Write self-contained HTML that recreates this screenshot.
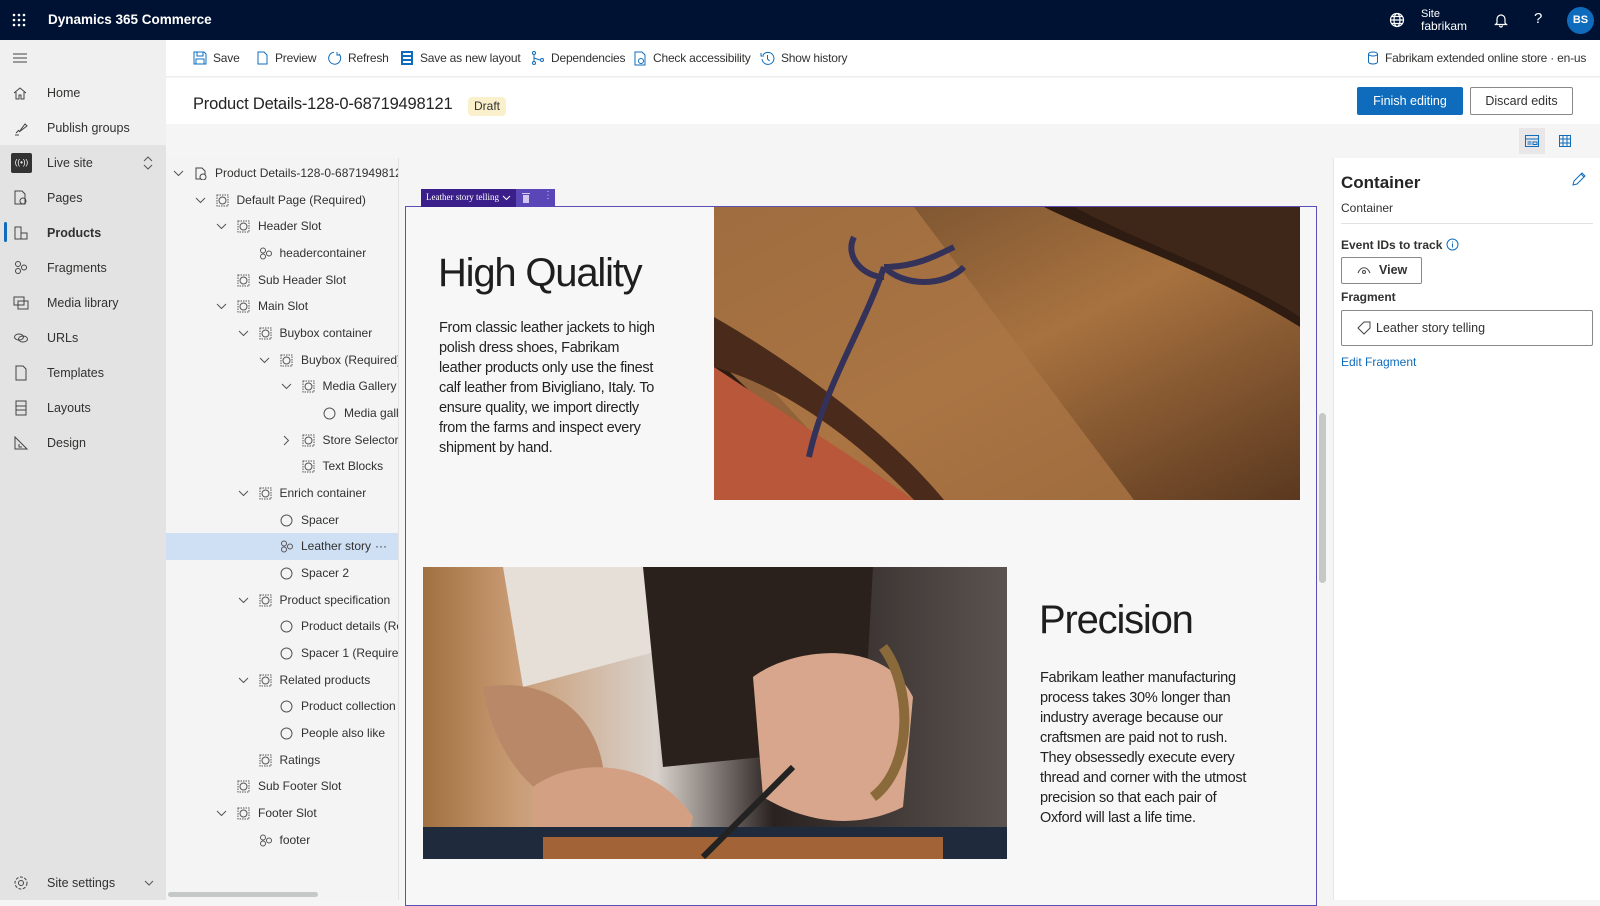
<!DOCTYPE html>
<html><head><meta charset="utf-8"><style>
*{box-sizing:border-box;margin:0;padding:0}
body{width:1600px;height:900px;overflow:hidden;font-family:"Liberation Sans",sans-serif;color:#323130;background:#f5f5f5;position:relative;font-size:13px}
.abs{position:absolute}
.top{left:0;top:0;width:1600px;height:40px;background:#001233}
.side{left:0;top:40px;width:166px;height:860px;background:#f0f0f0}
.nav{position:absolute;left:0;width:166px;height:35px;display:flex;align-items:center;font-size:12.5px;color:#323130}
.nav span{position:absolute;left:47px}
.nav svg{position:absolute;left:13px}
.tb{left:166px;top:40px;width:1434px;height:37px;background:#fff;border-bottom:1px solid #eee}
.tbi{position:absolute;top:50px;font-size:12px;letter-spacing:-0.2px;color:#323130;display:flex;align-items:center;gap:6px;height:16px;white-space:nowrap}
.tree{left:166px;top:158px;width:233px;height:742px;background:#f4f4f4;overflow:hidden;border-right:1px solid #e3e3e3}
.row{position:absolute;left:0;width:233px;height:26.67px;white-space:nowrap}
.row .t{position:absolute;top:6px;font-size:12px}
.row svg{position:absolute;top:7px}
.para{font-family:"Liberation Sans",sans-serif;font-size:14.5px;line-height:20px;color:#222;letter-spacing:-0.3px;white-space:nowrap}
</style></head><body>
<div class="abs top"></div>
<svg class="abs" style="left:12px;top:13px" width="14" height="14"><g fill="#fff"><circle cx="2" cy="2" r="1.3"/><circle cx="7" cy="2" r="1.3"/><circle cx="12" cy="2" r="1.3"/><circle cx="2" cy="7" r="1.3"/><circle cx="7" cy="7" r="1.3"/><circle cx="12" cy="7" r="1.3"/><circle cx="2" cy="12" r="1.3"/><circle cx="7" cy="12" r="1.3"/><circle cx="12" cy="12" r="1.3"/></g></svg>
<div class="abs" style="left:48px;top:12px;color:#fff;font-size:13.5px;font-weight:600">Dynamics 365 Commerce</div>
<svg class="abs" style="left:1389px;top:12px" width="16" height="16" fill="none" stroke="#fff" stroke-width="1.2"><circle cx="8" cy="8" r="6.5"/><ellipse cx="8" cy="8" rx="3" ry="6.5"/><path d="M1.5 8h13M2.5 4.5h11M2.5 11.5h11"/></svg>
<div class="abs" style="left:1421px;top:8px;color:#fff;font-size:11px;line-height:12px">Site<br><span style="font-size:12px">fabrikam</span></div>
<svg class="abs" style="left:1494px;top:12px" width="14" height="16" fill="none" stroke="#fff" stroke-width="1.2"><path d="M3 11V7a4 4 0 018 0v4l1.5 1.5h-11z M5.5 13.5a1.5 1.5 0 003 0"/></svg>
<div class="abs" style="left:1534px;top:10px;color:#fff;font-size:15px">?</div>
<div class="abs" style="left:1567px;top:7px;width:27px;height:27px;border-radius:50%;background:#0f6cbd;color:#fff;font-size:11px;font-weight:700;text-align:center;line-height:27px">BS</div>

<div class="abs side"></div>
<div class="abs" style="left:0;top:145px;width:166px;height:755px;background:#e3e3e3"></div>
<svg class="abs" style="left:13px;top:53px" width="14" height="10" stroke="#444" stroke-width="1.1"><path d="M0 1h14M0 5h14M0 9h14"/></svg>
<div class="nav" style="top:75px"><svg width="14" height="14" fill="none" stroke="#444"><path d="M1 7l6-5 6 5M3 6v7h3V9h2v4h3V6"/></svg><span>Home</span></div>
<div class="nav" style="top:110px"><svg width="16" height="16" fill="none" stroke="#444"><path d="M3 13l3-3M6 12l6-8 2 2-8 6zM2 15h4"/></svg><span>Publish groups</span></div>
<div class="nav" style="top:145px"><div style="position:absolute;left:11px;width:21px;height:20px;background:#333;border-radius:2px;color:#fff;font-size:8px;text-align:center;line-height:20px">((•))</div><span>Live site</span><svg style="left:143px" width="10" height="14" fill="none" stroke="#555"><path d="M1 5l4-4 4 4M1 9l4 4 4-4"/></svg></div>
<div class="nav" style="top:180px"><svg width="16" height="16" fill="none" stroke="#444"><path d="M2 1h7l3 3v10H2z"/><circle cx="10" cy="11" r="3"/></svg><span>Pages</span></div>
<div style="position:absolute;left:4px;top:222px;width:3px;height:20px;background:#0f6cbd;border-radius:2px"></div>
<div class="nav" style="top:215px;font-weight:700"><svg width="16" height="16" fill="none" stroke="#444"><path d="M2 2h6v12H2zM8 8h6v6H8"/></svg><span>Products</span></div>
<div class="nav" style="top:250px"><svg width="16" height="16" fill="none" stroke="#444"><circle cx="5" cy="4" r="2.5"/><circle cx="5" cy="11" r="2.5"/><circle cx="11" cy="7.5" r="2.5"/></svg><span>Fragments</span></div>
<div class="nav" style="top:285px"><svg width="16" height="16" fill="none" stroke="#444"><path d="M1 2h10v8H1zM5 6h10v8H5z"/></svg><span>Media library</span></div>
<div class="nav" style="top:320px"><svg width="16" height="16" fill="none" stroke="#444"><ellipse cx="6" cy="7" rx="4.5" ry="3"/><ellipse cx="10" cy="9" rx="4.5" ry="3"/></svg><span>URLs</span></div>
<div class="nav" style="top:355px"><svg width="16" height="16" fill="none" stroke="#444"><path d="M3 1h7l3 3v11H3z"/></svg><span>Templates</span></div>
<div class="nav" style="top:390px"><svg width="16" height="16" fill="none" stroke="#444"><path d="M3 1h10v14H3zM3 6h10M3 10h10"/></svg><span>Layouts</span></div>
<div class="nav" style="top:425px"><svg width="16" height="16" fill="none" stroke="#444"><path d="M2 2v12h12zM2 2l12 12M6 9v3h3"/></svg><span>Design</span></div>
<div class="nav" style="top:865px"><svg width="16" height="16" fill="none" stroke="#444"><circle cx="8" cy="8" r="2.5"/><circle cx="8" cy="8" r="6" stroke-dasharray="3 1.5"/></svg><span>Site settings</span><svg style="left:144px" width="10" height="8" fill="none" stroke="#555"><path d="M1 2l4 4 4-4"/></svg></div>

<div class="abs tb"></div>
<div class="tbi" style="left:193px"><svg width="14" height="14" fill="none" stroke="#0f6cbd"><path d="M1 1h10l2 2v10H1zM4 1v4h6V1M3 13V8h8v5"/></svg>Save</div>
<div class="tbi" style="left:255px"><svg width="14" height="14" fill="none" stroke="#0f6cbd"><path d="M3 1h6l3 3v9H3z"/></svg>Preview</div>
<div class="tbi" style="left:328px"><svg width="14" height="14" fill="none" stroke="#0f6cbd"><path d="M11 3a6 6 0 11-5-1.8M9 1v3h3"/></svg>Refresh</div>
<div class="tbi" style="left:400px"><svg width="14" height="14" fill="#0f6cbd"><path d="M1 0h12v14H1zM3 2v2h8V2zM3 6v2h8V6zM3 10v2h8v-2z"/></svg>Save as new layout</div>
<div class="tbi" style="left:531px"><svg width="14" height="14" fill="none" stroke="#0f6cbd"><circle cx="3" cy="2" r="1.5"/><circle cx="3" cy="12" r="1.5"/><circle cx="11" cy="9" r="1.5"/><path d="M3 3.5v7M3 7l6 2"/></svg>Dependencies</div>
<div class="tbi" style="left:633px"><svg width="14" height="15" fill="none" stroke="#0f6cbd"><path d="M2 1h7l3 3v10H2z"/><circle cx="8" cy="10" r="2.5"/></svg>Check accessibility</div>
<div class="tbi" style="left:760px"><svg width="15" height="15" fill="none" stroke="#0f6cbd"><path d="M3 4a6 6 0 11-1 4M1 2v3h3M7.5 4v4l2 2"/></svg>Show history</div>
<div class="tbi" style="left:1367px"><svg width="12" height="14" fill="none" stroke="#0f6cbd"><ellipse cx="6" cy="3" rx="4.5" ry="2"/><path d="M1.5 3v8c0 1 2 2 4.5 2s4.5-1 4.5-2V3"/></svg>Fabrikam extended online store · en-us</div>

<div class="abs" style="left:166px;top:78px;width:1434px;height:46px;background:#fff"></div>
<div class="abs" style="left:193px;top:95px;font-size:16.5px;color:#242424;letter-spacing:-0.2px">Product Details-128-0-68719498121</div>
<div class="abs" style="left:468px;top:97px;background:#fbf0cc;border-radius:4px;padding:0 6px;height:19px;line-height:19px;font-size:12px">Draft</div>
<div class="abs" style="left:1357px;top:87px;width:106px;height:28px;background:#0f6cbd;color:#fff;font-size:12.5px;text-align:center;line-height:28px;border-radius:2px">Finish editing</div>
<div class="abs" style="left:1470px;top:87px;width:103px;height:28px;border:1px solid #8a8886;background:#fff;font-size:12.5px;text-align:center;line-height:26px;border-radius:2px">Discard edits</div>
<div class="abs" style="left:1519px;top:128px;width:26px;height:26px;background:#e8e6e6"></div>
<svg class="abs" style="left:1525px;top:135px" width="14" height="12" fill="none" stroke="#0f6cbd"><path d="M.5.5h13v11H.5zM.5 4h13M2.5 7h4M2.5 9h4M8 7h4v2.5H8z"/></svg>
<svg class="abs" style="left:1559px;top:135px" width="12" height="12" fill="none" stroke="#0f6cbd"><path d="M.5.5h11v11H.5zM4 .5v11M8 .5v11M.5 4h11M.5 8h11"/></svg>

<div class="abs tree">
<div style="position:absolute;left:0;top:375px;width:233px;height:27px;background:#cfe0f5"></div>
<div id="rows"></div>
<div style="position:absolute;left:2px;top:734px;width:150px;height:5px;border-radius:3px;background:#c4c8c6"></div>
</div>

<div class="abs" style="left:405px;top:158px;width:925px;height:742px;background:#f5f5f5"></div>
<div class="abs" style="left:405px;top:206px;width:912px;height:700px;border:1px solid #5b4fb5;background:#f7f7f7"></div>
<div class="abs" style="left:421px;top:189px;width:134px;height:18px;background:#3a1f8a"></div>
<div class="abs" style="left:516px;top:189px;width:39px;height:18px;background:#5a46b6"></div>
<div class="abs" style="left:426px;top:192px;color:#fff;font-family:'Liberation Serif',serif;font-size:9px">Leather story telling</div>
<svg class="abs" style="left:502px;top:195px" width="9" height="6" fill="none" stroke="#fff"><path d="M1 1l3.5 3.5L8 1"/></svg>
<svg class="abs" style="left:522px;top:192px" width="8" height="11" fill="#d0c8f0"><path d="M0 1h8v1H0zM1 3h6v8H1z"/></svg>
<div class="abs" style="left:543px;top:190px;color:#d0c8f0;font-size:10px">⋮</div>

<svg class="abs" style="left:714px;top:207px" width="586" height="293">
<defs><linearGradient id="g1" x1="0" y1="0" x2="1" y2="1"><stop offset="0" stop-color="#6b4a2c"/><stop offset=".5" stop-color="#a8723f"/><stop offset="1" stop-color="#5a381f"/></linearGradient></defs>
<rect width="586" height="293" fill="#2e1c12"/>
<path d="M0 0h330c60 30 160 60 256 120v173H160L0 120z" fill="url(#g1)"/>
<path d="M0 0h200L420 293H150L0 150z" fill="#ab7545" opacity=".8"/>
<path d="M360 0h226v110c-60-40-150-70-226-110z" fill="#3e2718"/>
<path d="M0 160c60 40 140 90 200 133H0z" fill="#b9573a"/>
<path d="M0 110c70 40 170 110 230 183h-30C140 230 70 180 0 160z" fill="#4a2a1a"/>
<path d="M140 30c-10 20 10 40 30 40M170 60c30 0 50-10 70-20M170 60c20 20 60 20 80 0M170 60c-20 60-60 120-75 190" fill="none" stroke="#35325a" stroke-width="6"/>
</svg>
<div class="abs" style="left:438px;top:251px;font-size:40px;color:#1e1e1e;letter-spacing:-1.2px">High Quality</div>
<div class="abs para" style="left:439px;top:318px">From classic leather jackets to high<br>polish dress shoes, Fabrikam<br>leather products only use the finest<br>calf leather from Bivigliano, Italy. To<br>ensure quality, we import directly<br>from the farms and inspect every<br>shipment by hand.</div>

<svg class="abs" style="left:423px;top:567px" width="584" height="292">
<defs><linearGradient id="g2" x1="0" x2="1"><stop offset="0" stop-color="#a0703f"/><stop offset=".15" stop-color="#c89a72"/><stop offset=".4" stop-color="#d9d2cc"/><stop offset=".6" stop-color="#2a2220"/><stop offset="1" stop-color="#5a5350"/></linearGradient></defs>
<rect width="584" height="292" fill="url(#g2)"/>
<path d="M80 0h150l20 80-150 40z" fill="#e6dfd8"/>
<path d="M220 0h230l-10 180-200 20z" fill="#2b211c"/>
<path d="M60 120c60-10 110 20 120 80l-40 40c-40-20-70-60-80-120z" fill="#b88868"/>
<path d="M330 110c40-30 130-40 160 20l-10 110c-40 20-90 20-140-10z" fill="#d8a68c"/>
<path d="M110 220c40-30 120-30 160 30l-10 42H110z" fill="#d4a084"/>
<path d="M0 260h584v32H0z" fill="#1f2a3d"/>
<path d="M120 270h400v22H120z" fill="#b06a35" opacity=".9"/>
<path d="M370 200l-90 90" stroke="#222" stroke-width="6"/>
<path d="M460 80c30 40 30 120-10 150" fill="none" stroke="#8a6a3a" stroke-width="10"/>
</svg>
<div class="abs" style="left:1039px;top:598px;font-size:40px;color:#1e1e1e;letter-spacing:-1.2px">Precision</div>
<div class="abs para" style="left:1040px;top:668px">Fabrikam leather manufacturing<br>process takes 30% longer than<br>industry average because our<br>craftsmen are paid not to rush.<br>They obsessedly execute every<br>thread and corner with the utmost<br>precision so that each pair of<br>Oxford will last a life time.</div>
<div class="abs" style="left:1319px;top:413px;width:7px;height:170px;border-radius:4px;background:#c4c8c6"></div>

<div class="abs" style="left:1333px;top:158px;width:267px;height:742px;background:#fff;border-left:1px solid #e6e6e6"></div>
<div class="abs" style="left:1341px;top:173px;font-size:17px;font-weight:700;color:#242424">Container</div>
<svg class="abs" style="left:1572px;top:172px" width="14" height="14" fill="none" stroke="#0f6cbd"><path d="M1 13l1-4 8-8 3 3-8 8zM9 2l3 3"/></svg>
<div class="abs" style="left:1341px;top:201px;font-size:12px">Container</div>
<div class="abs" style="left:1341px;top:223px;width:252px;height:1px;background:#e1e1e1"></div>
<div class="abs" style="left:1341px;top:238px;font-size:12px;font-weight:600">Event IDs to track</div>
<svg class="abs" style="left:1446px;top:238px" width="13" height="13" fill="none" stroke="#0f6cbd"><circle cx="6.5" cy="6.5" r="5.5"/><path d="M6.5 5.5v4M6.5 3.5v1"/></svg>
<div class="abs" style="left:1341px;top:257px;width:81px;height:27px;border:1px solid #8a8886;border-radius:2px;font-size:12.5px;font-weight:600;line-height:25px;padding-left:37px">View</div>
<svg class="abs" style="left:1357px;top:266px" width="14" height="9" fill="none" stroke="#444"><path d="M1 7c3-7 9-7 12 0"/><circle cx="7" cy="6" r="1.5"/></svg>
<div class="abs" style="left:1341px;top:290px;font-size:12px;font-weight:600">Fragment</div>
<div class="abs" style="left:1341px;top:310px;width:252px;height:36px;border:1px solid #8a8886;border-radius:2px;font-size:12.5px;line-height:34px;padding-left:34px">Leather story telling</div>
<svg class="abs" style="left:1357px;top:321px" width="14" height="14" fill="none" stroke="#444"><path d="M1 7l6-6h6v6l-6 6zM10 4h.1"/></svg>
<div class="abs" style="left:1341px;top:355px;font-size:12px;color:#0f6cbd">Edit Fragment</div>

<script>
var R=[[0,1,'p','Product Details-128-0-68719498121'],[1,1,'s','Default Page (Required)'],[2,1,'s','Header Slot'],[3,0,'f','headercontainer'],[2,0,'s','Sub Header Slot'],[2,1,'s','Main Slot'],[3,1,'s','Buybox container'],[4,1,'s','Buybox (Required)'],[5,1,'s','Media Gallery'],[6,0,'c','Media gall'],[5,2,'s','Store Selector'],[5,0,'s','Text Blocks'],[3,1,'s','Enrich container'],[4,0,'c','Spacer'],[4,0,'f','Leather story t'],[4,0,'c','Spacer 2'],[3,1,'s','Product specification'],[4,0,'c','Product details (Re'],[4,0,'c','Spacer 1 (Required'],[3,1,'s','Related products'],[4,0,'c','Product collection ('],[4,0,'c','People also like'],[3,0,'s','Ratings'],[2,0,'s','Sub Footer Slot'],[2,1,'s','Footer Slot'],[3,0,'f','footer']];
var ic={p:'<path d="M2 1h6l3 3v8H2z" fill="none" stroke="#444"/><circle cx="9" cy="10" r="3" fill="#f4f4f4" stroke="#444"/>',s:'<rect x="1" y="1" width="11" height="11" fill="none" stroke="#555" stroke-dasharray="1.5 1"/><circle cx="6.5" cy="6.5" r="3.5" fill="none" stroke="#555"/>',c:'<circle cx="6.5" cy="6.5" r="5.5" fill="none" stroke="#555"/>',f:'<circle cx="4" cy="3.5" r="2.5" fill="none" stroke="#555"/><circle cx="4" cy="9.5" r="2.5" fill="none" stroke="#555"/><circle cx="10" cy="6.5" r="2.5" fill="none" stroke="#555"/>'};
var h='';R.forEach(function(r,i){var L=r[0],x=L*21.5;h+='<div class="row" style="top:'+(i*26.67+2)+'px">';
if(r[1]==1)h+='<svg style="left:'+(7+x)+'px;top:10px" width="11" height="7"><path d="M1 1l4.5 4.5L10 1" fill="none" stroke="#555"/></svg>';
if(r[1]==2)h+='<svg style="left:'+(9+x)+'px;top:8px" width="7" height="11"><path d="M1 1l4.5 4.5L1 10" fill="none" stroke="#555"/></svg>';
h+='<svg style="left:'+(28+x)+'px" width="13" height="13">'+ic[r[2]]+'</svg><div class="t" style="left:'+(49+x)+'px">'+r[3]+'</div>';
if(i==14)h+='<div class="t" style="left:206px;background:#cfe0f5;padding-left:3px">···</div>';h+='</div>';});
document.getElementById('rows').innerHTML=h;
</script>
</body></html>
